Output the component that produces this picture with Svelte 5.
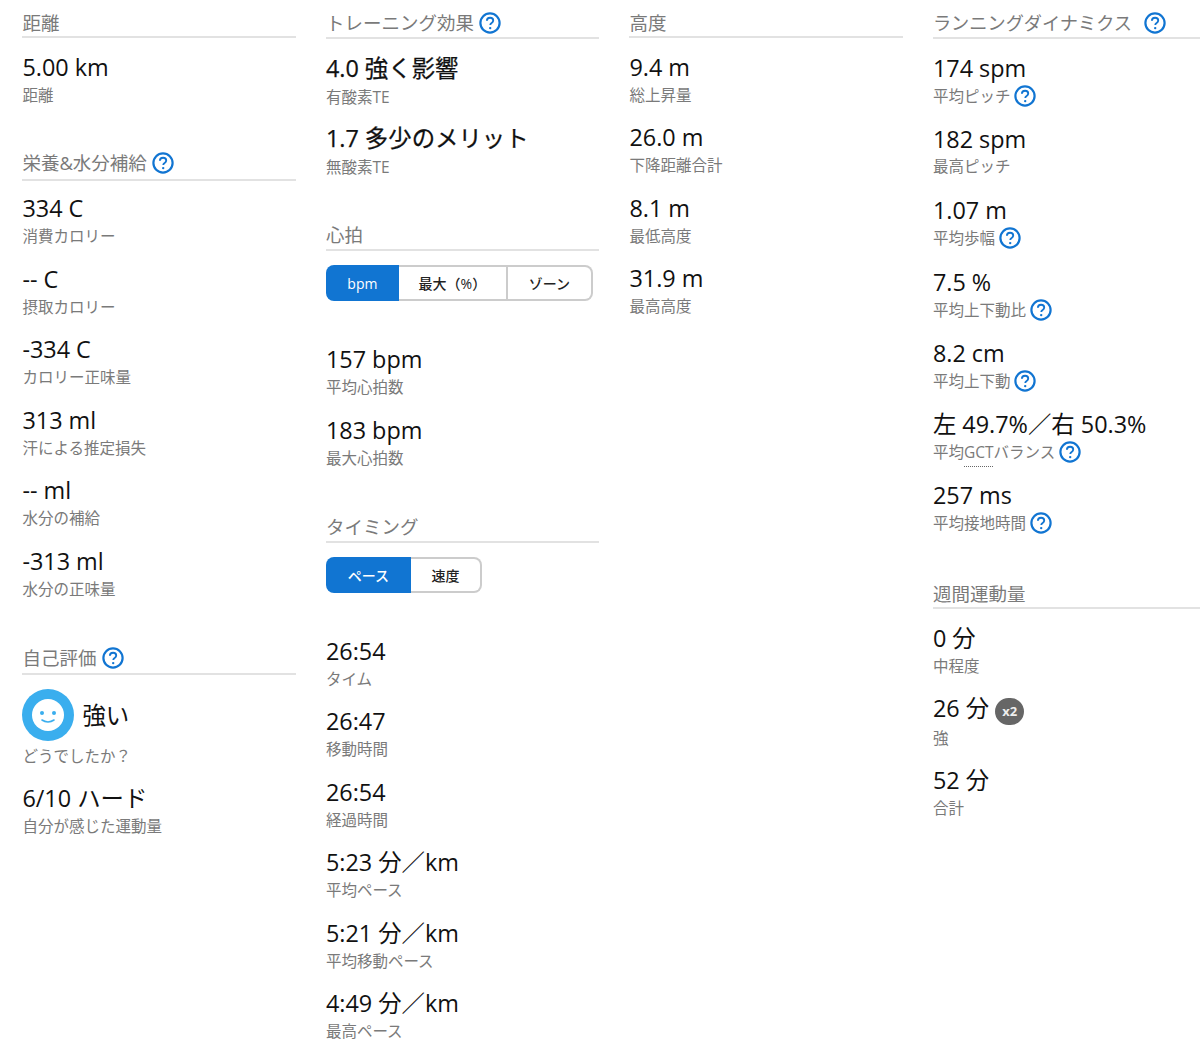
<script>
  const nutrition = [
    { value: '334 C', label: '消費カロリー' },
    { value: '-- C', label: '摂取カロリー' },
    { value: '-334 C', label: 'カロリー正味量' },
    { value: '313 ml', label: '汗による推定損失' },
    { value: '-- ml', label: '水分の補給' },
    { value: '-313 ml', label: '水分の正味量' }
  ]
  const heart = [
    { value: '157 bpm', label: '平均心拍数' },
    { value: '183 bpm', label: '最大心拍数' }
  ]
  const timing = [
    { value: '26:54', label: 'タイム' },
    { value: '26:47', label: '移動時間' },
    { value: '26:54', label: '経過時間' },
    { value: '5:23 分／km', label: '平均ペース' },
    { value: '5:21 分／km', label: '平均移動ペース' },
    { value: '4:49 分／km', label: '最高ペース' }
  ]
  const elevation = [
    { value: '9.4 m', label: '総上昇量' },
    { value: '26.0 m', label: '下降距離合計' },
    { value: '8.1 m', label: '最低高度' },
    { value: '31.9 m', label: '最高高度' }
  ]
  const dynamics = [
    { value: '174 spm', label: '平均ピッチ', help: true },
    { value: '182 spm', label: '最高ピッチ' },
    { value: '1.07 m', label: '平均歩幅', help: true },
    { value: '7.5 %', label: '平均上下動比', help: true },
    { value: '8.2 cm', label: '平均上下動', help: true }
  ]
</script>

{#snippet help()}
  <svg class="help" viewBox="0 0 22 22" aria-hidden="true">
    <circle cx="11" cy="11" r="9.6" fill="none" stroke="#1175d2" stroke-width="2.2" />
    <path d="M7.9 8.7c0-1.8 1.3-3 3.2-3 1.8 0 3.1 1.1 3.1 2.7 0 1.2-.6 1.9-1.6 2.6-.9.6-1.3 1.1-1.3 2.1" fill="none" stroke="#1175d2" stroke-width="1.9" />
    <circle cx="11.2" cy="16.1" r="1.2" fill="#1175d2" />
  </svg>
{/snippet}

{#snippet item(row)}
  <div class="item">
    <div class="value">{row.value}</div>
    <div class="label">{row.label}{#if row.help}{@render help()}{/if}</div>
  </div>
{/snippet}

<main class="grid">
  <div class="col">
    <section>
      <h3>距離</h3>
      {@render item({ value: '5.00 km', label: '距離' })}
    </section>
    <section class="sec-food">
      <h3>栄養&水分補給 {@render help()}</h3>
      {#each nutrition as row}{@render item(row)}{/each}
    </section>
    <section class="sec-self">
      <h3>自己評価 {@render help()}</h3>
      <div class="mood">
        <svg class="face" viewBox="0 0 52 52" aria-hidden="true">
          <circle cx="26" cy="26" r="26" fill="#3aaeee" />
          <circle cx="26" cy="26" r="16" fill="#fff" />
          <circle cx="20" cy="24" r="2" fill="#3aaeee" />
          <circle cx="32" cy="24" r="2" fill="#3aaeee" />
          <path d="M20 31c3.5 2.6 8.500 2.600 12 0" fill="none" stroke="#3aaeee" stroke-width="1.600" stroke-linecap="round" />
        </svg>
        <span class="value">強い</span>
      </div>
      <div class="label mood-label">どうでしたか？</div>
      {@render item({ value: '6/10 ハード', label: '自分が感じた運動量' })}
    </section>
  </div>

  <div class="col">
    <section class="sec-te">
      <h3>トレーニング効果 {@render help()}</h3>
      <div class="item">
        <div class="value strong">4.0 強く影響</div>
        <div class="label">有酸素TE</div>
      </div>
      <div class="item">
        <div class="value strong">1.7 多少のメリット</div>
        <div class="label">無酸素TE</div>
      </div>
    </section>
    <section class="sec-heart">
      <h3>心拍</h3>
      <div class="toggle">
        <button class="active w-bpm">bpm</button>
        <button class="w-max">最大（%）</button>
        <button class="w-zone">ゾーン</button>
      </div>
      {#each heart as row}{@render item(row)}{/each}
    </section>
    <section class="sec-timing">
      <h3>タイミング</h3>
      <div class="toggle">
        <button class="active w-pace">ペース</button>
        <button class="w-speed">速度</button>
      </div>
      {#each timing as row}{@render item(row)}{/each}
    </section>
  </div>

  <div class="col">
    <section class="sec-elev">
      <h3>高度</h3>
      {#each elevation as row}{@render item(row)}{/each}
    </section>
  </div>

  <div class="col">
    <section class="sec-dyn">
      <h3>ランニングダイナミクス {@render help()}</h3>
      {#each dynamics as row}{@render item(row)}{/each}
      <div class="item">
        <div class="value">左 49.7%／右 50.3%</div>
        <div class="label"><span>平均<span class="dotted">GCT</span>バランス</span>{@render help()}</div>
      </div>
      <div class="item">
        <div class="value">257 ms</div>
        <div class="label">平均接地時間{@render help()}</div>
      </div>
    </section>
    <section class="sec-week">
      <h3>週間運動量</h3>
      <div class="item">
        <div class="value">0 分</div>
        <div class="label">中程度</div>
      </div>
      <div class="item with-badge">
        <div class="value">26 分 <span class="badge">x2</span></div>
        <div class="label">強</div>
      </div>
      <div class="item">
        <div class="value">52 分</div>
        <div class="label">合計</div>
      </div>
    </section>
  </div>
</main>

<style>
  :global(body) {
    background: #fff;
    overflow: hidden;
  }

  .grid {
    display: grid;
    grid-template-columns: repeat(4, 273.5px);
    column-gap: 30px;
    padding: 10px 0 0 22.4px;
    width: 1200px;
    height: 1054px;
    overflow: hidden;
    box-sizing: border-box;
    font-family: "Open Sans", "Noto Sans CJK JP", sans-serif;
  }

  h3 {
    margin: 0 0 12px;
    height: 26px;
    line-height: 26px;
    font-size: 18.5px;
    font-weight: 400;
    color: #7a7a7a;
    border-bottom: 2px solid #e2e2e2;
    display: flex;
    align-items: flex-start;
    gap: 5.5px;
    white-space: nowrap;
  }

  h3 .help {
    margin-top: 2px;
  }

  .item {
    height: 70.5px;
  }

  .value {
    font-size: 23.4px;
    line-height: 35px;
    color: #111;
    white-space: nowrap;
  }

  .strong {
    -webkit-text-stroke: 0.25px #111;
  }

  .label {
    font-size: 15.5px;
    line-height: 20px;
    color: #7a7a7a;
    display: flex;
    align-items: center;
    gap: 4px;
    white-space: nowrap;
  }

  .help {
    width: 22px;
    height: 22px;
    flex: none;
  }

  .dotted {
    border-bottom: 1px dotted #666;
    padding-bottom: 3px;
  }

  .sec-food {
    margin-top: 29.5px;
  }

  .sec-food h3 {
    height: 29px;
    margin-bottom: 10px;
  }

  .sec-food .item {
    height: 70.6px;
  }

  .sec-self {
    margin-top: 30.4px;
  }

  .sec-self h3 {
    height: 28px;
    margin-bottom: 14px;
  }

  .mood {
    display: flex;
    align-items: center;
    gap: 8px;
  }

  .mood .value {
    padding-top: 1px;
  }

  .face {
    width: 52px;
    height: 52px;
  }

  .mood-label {
    margin: 5px 0 15px;
  }

  .sec-te h3 {
    height: 27px;
  }

  .sec-te .item {
    height: 69.5px;
  }

  .sec-te .label {
    margin-top: 1px;
  }

  .sec-heart {
    margin-top: 32px;
  }

  .sec-heart h3 {
    height: 27px;
    margin-bottom: 14px;
  }

  .sec-heart .item {
    height: 71px;
  }

  .sec-timing {
    margin-top: 30px;
  }

  .sec-timing h3 {
    height: 27px;
    margin-bottom: 14px;
  }

  .sec-timing .toggle {
    margin-bottom: 40.5px;
  }

  .sec-timing .item {
    height: 70.5px;
  }

  .sec-elev .item {
    height: 70.3px;
  }

  .toggle {
    display: flex;
    height: 36px;
    margin-bottom: 41px;
  }

  .toggle button {
    height: 36px;
    padding: 0;
    background: #fff;
    color: #222;
    font: 500 14px "Open Sans", "Noto Sans CJK JP", sans-serif;
    border: 2px solid #ccc;
    border-left-width: 0;
    box-sizing: border-box;
  }

  .toggle button:last-child {
    border-radius: 0 8px 8px 0;
  }

  .toggle button.active {
    background: #1175d2;
    border: none;
    color: #fff;
    border-radius: 8px 0 0 8px;
  }

  .w-bpm {
    width: 73px;
  }

  .w-max {
    width: 109px;
  }

  .w-zone {
    width: 85px;
  }

  .w-pace {
    width: 85px;
  }

  .w-speed {
    width: 71px;
  }

  .sec-dyn h3 {
    height: 27px;
    font-size: 18.2px;
  }

  .sec-dyn h3 .help {
    margin-left: 6px;
  }

  .sec-dyn .item {
    height: 71.2px;
  }

  .sec-dyn .label {
    margin-top: -1px;
  }

  .sec-week {
    margin-top: 31.6px;
  }

  .sec-week h3 {
    margin-bottom: 11px;
  }

  .sec-week .item {
    height: 70px;
  }

  .sec-week .value {
    line-height: 36px;
  }

  .sec-week .label {
    margin-top: 0;
  }

  .sec-week .with-badge {
    height: 72px;
  }

  .sec-week .with-badge .label {
    margin-top: 2px;
  }

  .badge {
    display: inline-flex;
    align-items: center;
    justify-content: center;
    width: 29px;
    height: 27px;
    border-radius: 14px;
    background: #666;
    color: #eee;
    font-size: 13px;
    font-weight: 700;
    vertical-align: 1px;
    line-height: 1;
  }
</style>
